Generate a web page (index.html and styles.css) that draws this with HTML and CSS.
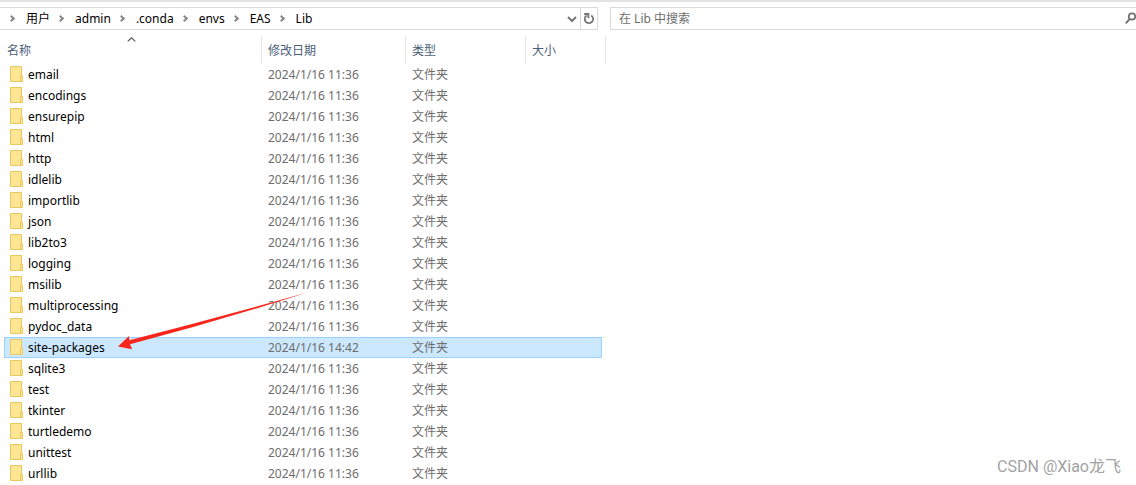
FILE: index.html
```html
<!DOCTYPE html>
<html lang="zh-CN">
<head>
  <meta charset="UTF-8" />
  <meta name="viewport" content="width=device-width, initial-scale=1.0"/>
  <title>Lib</title>
  <link rel="stylesheet" href="styles.css">
</head>
<body>
  <header class="toolbar">
    <div class="address">
      <nav class="crumbs" aria-label="路径">
        <button type="button">用户</button>
        <button type="button">admin</button>
        <button type="button">.conda</button>
        <button type="button">envs</button>
        <button type="button">EAS</button>
        <button type="button">Lib</button>
      </nav>
      <button type="button" class="history" aria-label="历史记录">
        <svg width="10" height="8" viewBox="0 0 10 8"><path d="M1 2l4 4 4-4" fill="none" stroke="#777" stroke-width="2"/></svg>
      </button>
      <button type="button" class="refresh" aria-label="刷新">
        <svg width="12" height="13" viewBox="0 0 12 13"><path d="M8.2 3.4a4.2 4.2 0 1 1-4.6.1M1.2 2h4.2v4.2" fill="none" stroke="#777" stroke-width="1.8"/></svg>
      </button>
    </div>
    <div class="search">
      <input type="search" placeholder="在 Lib 中搜索" aria-label="在 Lib 中搜索">
      <svg width="11" height="13" viewBox="0 0 11 13"><circle cx="7" cy="4.5" r="3.2" fill="none" stroke="#707070" stroke-width="1.7"/><path d="M4.8 6.8L.8 11.4" stroke="#707070" stroke-width="2"/></svg>
    </div>
  </header>

  <main class="files">
    <table>
      <colgroup>
        <col class="col-name"><col class="col-date"><col class="col-type"><col class="col-size">
      </colgroup>
      <thead>
        <tr>
          <th aria-sort="ascending">名称
            <svg class="sort" width="9" height="5" viewBox="0 0 9 5"><path d="M.7 4.4L4.5.8l3.8 3.6" fill="none" stroke="#555" stroke-width="1.2"/></svg>
          </th>
          <th>修改日期</th>
          <th>类型</th>
          <th>大小</th>
        </tr>
      </thead>
      <tbody id="rows"></tbody>
    </table>
    <svg class="arrow" width="192" height="60" viewBox="0 0 192 60"><path d="M1 54.5L12 44l.4 4.2Q100 26 190 .5 102 29 13 52.3l2.2 5z" fill="#f8261b"/></svg>
  </main>

  <div class="watermark">CSDN @Xiao龙飞</div>

  <script src="script.js"></script>
</body>
</html>
```
FILE: styles.css
```css
* { box-sizing: border-box; }
body { margin: 0; background: #fff; border-top: 2px solid #e3e3e3; font: 12px/20px "Noto Sans", "Noto Sans CJK SC", sans-serif; color: #000; }
button { border: 0; padding: 0; background: none; font: inherit; color: inherit; }
svg { display: block; }

.toolbar { display: grid; grid-template-columns: 598fr 526fr; gap: 12px; padding-top: 5px; }
.address, .search { display: flex; align-items: stretch; height: 23px; border: 1px solid #d9d9d9; }
.address { border-left: 0; }
.crumbs { display: flex; flex: 1; padding-left: 1px; }
.crumbs button { display: flex; align-items: center; }
.crumbs button::before { content: ""; width: 3px; height: 3px; margin: 0 12px 0 8px; border: solid #888; border-width: 2px 2px 0 0; transform: rotate(45deg); }
.history, .refresh { display: flex; align-items: center; justify-content: center; width: 17px; }
.refresh { border-left: 1px solid #d9d9d9; }
.search { align-items: center; border-right: 0; }
.search input { flex: 1; min-width: 0; height: 21px; border: 0; padding: 0 8px; outline: 0; background: none; font: inherit; }
.search input::placeholder { color: #6d6d6d; opacity: 1; }

.files { position: relative; padding-top: 7px; }
table { width: 606px; table-layout: fixed; border-spacing: 0; }
.col-name { width: 262px; }
.col-date { width: 144px; }
.col-type { width: 120px; }
.col-size { width: 80px; }
th { position: relative; height: 27px; padding: 0 6px; border-right: 1px solid #e5e5e5; text-align: left; font-weight: normal; color: #4c607a; }
th:first-child { padding-left: 7px; }
.sort { position: absolute; top: 0; left: 50%; margin-left: -4px; }
td { height: 21px; padding: 0 6px; line-height: 20px; color: #6d6d6d; }
td:first-child { border-left: 4px solid transparent; color: #000; }
td:last-child { border-right: 4px solid transparent; }
.name { display: flex; align-items: center; gap: 5px; }
.name svg { margin-bottom: 2px; }
.selected td { background: #cce8ff padding-box; box-shadow: inset 0 1px #99d1ff, inset 0 -1px #99d1ff; }
.selected td:first-child { box-shadow: inset 0 1px #99d1ff, inset 0 -1px #99d1ff, inset 1px 0 #99d1ff; }
.selected td:last-child { box-shadow: inset 0 1px #99d1ff, inset 0 -1px #99d1ff, inset -1px 0 #99d1ff; }

.arrow { position: absolute; top: 262px; left: 117px; }
.watermark { position: absolute; right: 15px; bottom: 8px; font: 16px/20px Roboto, "Noto Sans CJK SC", sans-serif; color: #a3a3a3; }
```
FILE: script.js
```js
const folders = ["email", "encodings", "ensurepip", "html", "http", "idlelib", "importlib", "json", "lib2to3", "logging",
  "msilib", "multiprocessing", "pydoc_data", "site-packages", "sqlite3", "test", "tkinter", "turtledemo", "unittest", "urllib"];

const icon = `<svg width="13" height="16" viewBox="0 0 13 16"><path d="M.5.5h11v15H.5z" fill="#ffe594" stroke="#e8c85f"/><path d="M10.5 9.5h2v6h-2z" fill="#ffe594" stroke="#e8c85f"/></svg>`;

document.getElementById("rows").innerHTML = folders.map(name => {
  const selected = name === "site-packages";
  return `<tr${selected ? ' class="selected"' : ""}>
    <td><span class="name">${icon}${name}</span></td>
    <td>2024/1/16 ${selected ? "14:42" : "11:36"}</td>
    <td>文件夹</td>
    <td></td>
  </tr>`;
}).join("");
```
